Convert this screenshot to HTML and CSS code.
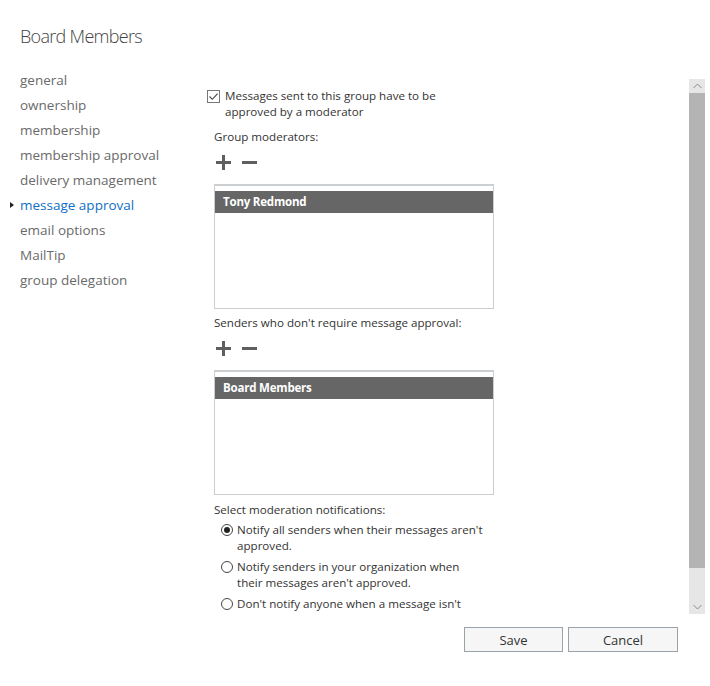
FILE: index.html
```html
<!DOCTYPE html>
<html lang="en">
<head>
<meta charset="utf-8">
<title>Board Members</title>
<link rel="stylesheet" href="styles.css">
</head>
<body>
<div class="page">
  <h1 class="title">Board Members</h1>
  <div class="main">
    <ul class="nav">
      <li>general</li>
      <li>ownership</li>
      <li>membership</li>
      <li>membership approval</li>
      <li>delivery management</li>
      <li class="active">message approval</li>
      <li>email options</li>
      <li>MailTip</li>
      <li>group delegation</li>
    </ul>
    <div class="scroller">
      <div class="content">
        <div class="check-row">
          <span class="checkbox">
            <svg width="11" height="11" viewBox="0 0 11 11"><path d="M1.5 5.5 L4.3 8.3 L9.6 2.6" fill="none" stroke="#444" stroke-width="1.1"/></svg>
          </span>
          <span class="check-text">Messages sent to this group have to be approved by a moderator</span>
        </div>
        <div class="section">
          <div class="label">Group moderators:</div>
          <div class="tools">
            <svg class="plus" width="15" height="15" viewBox="0 0 15 15"><path d="M0 6h15v3H0zM6 0h3v15H6z" fill="#5f5f5f"/></svg>
            <svg class="minus" width="15" height="15" viewBox="0 0 15 15"><path d="M0 6h15v3H0z" fill="#5f5f5f"/></svg>
          </div>
          <div class="listbox">
            <div class="list-item">Tony Redmond</div>
          </div>
        </div>
        <div class="section">
          <div class="label">Senders who don't require message approval:</div>
          <div class="tools">
            <svg class="plus" width="15" height="15" viewBox="0 0 15 15"><path d="M0 6h15v3H0zM6 0h3v15H6z" fill="#5f5f5f"/></svg>
            <svg class="minus" width="15" height="15" viewBox="0 0 15 15"><path d="M0 6h15v3H0z" fill="#5f5f5f"/></svg>
          </div>
          <div class="listbox">
            <div class="list-item">Board Members</div>
          </div>
        </div>
        <div class="section notify">
          <div class="label">Select moderation notifications:</div>
          <div class="radios">
            <div class="radio-row">
              <span class="radio checked"></span>
              <span class="radio-text">Notify all senders when their messages aren't approved.</span>
            </div>
            <div class="radio-row">
              <span class="radio"></span>
              <span class="radio-text">Notify senders in your organization when their messages aren't approved.</span>
            </div>
            <div class="radio-row">
              <span class="radio"></span>
              <span class="radio-text">Don't notify anyone when a message isn't approved.</span>
            </div>
          </div>
        </div>
      </div>
      <div class="scrollbar">
        <div class="sb-btn sb-up">
          <svg width="9" height="6" viewBox="0 0 9 6"><path d="M0.5 5 L4.5 1 L8.5 5" fill="none" stroke="#8a8a8a" stroke-width="1"/></svg>
        </div>
        <div class="sb-thumb"></div>
        <div class="sb-rest">
          <svg width="9" height="6" viewBox="0 0 9 6"><path d="M0.5 1 L4.5 5 L8.5 1" fill="none" stroke="#8a8a8a" stroke-width="1"/></svg>
        </div>
      </div>
    </div>
  </div>
  <div class="buttons">
    <button class="btn btn-save">Save</button>
    <button class="btn btn-cancel">Cancel</button>
  </div>
</div>
</body>
</html>
```
FILE: styles.css
```css
* { box-sizing: border-box; }
html, body { margin: 0; padding: 0; background: #fff; }
body {
  font-family: "Segoe UI", "Open Sans", "Noto Sans", sans-serif;
  color: #333;
  width: 710px;
  height: 686px;
  overflow: hidden;
}
.page { padding-top: 22px; }
.title {
  margin: 0 0 0 20px;
  font-size: 18px;
  font-weight: 300;
  letter-spacing: -0.7px;
  line-height: 28px;
  color: #444;
}
.main {
  display: flex;
  align-items: flex-start;
  margin-top: 17px;
}
.nav {
  list-style: none;
  margin: 1px 0 0 0;
  padding: 0 0 0 20px;
  width: 190px;
  flex: none;
}
.nav li {
  position: relative;
  font-size: 13.5px;
  line-height: 25px;
  color: #6a6a6a;
  white-space: nowrap;
}
.nav li.active { color: #0f6fc6; }
.nav li.active::before {
  content: "";
  position: absolute;
  left: -10px;
  top: 9px;
  border-left: 4px solid #222;
  border-top: 3.5px solid transparent;
  border-bottom: 3.5px solid transparent;
}
.scroller {
  margin-top: 12px;
  width: 515px;
  height: 535px;
  display: flex;
  flex: none;
}
.content {
  flex: 1;
  overflow: hidden;
  padding: 9px 0 0 17px;
  font-size: 11.6px;
  line-height: 16px;
}
.check-row { display: flex; align-items: flex-start; }
.checkbox {
  width: 13px;
  height: 13px;
  border: 1px solid #777;
  margin-top: 2px;
  margin-right: 5px;
  flex: none;
  display: flex;
  align-items: center;
  justify-content: center;
  background: #fff;
}
.checkbox svg { display: block; }
.check-text { width: 230px; }
.section { padding-left: 7px; margin-top: 9px; }
.section + .section { margin-top: 6px; }
.section.notify { margin-top: 7px; }
.label { color: #333; }
.tools {
  display: flex;
  gap: 11px;
  height: 15px;
  margin-top: 10px;
  padding-left: 2px;
}
.tools svg { display: block; }
.listbox {
  margin-top: 14px;
  width: 280px;
  height: 125px;
  border: 1px solid #cbcfd1;
  border-top: 2px solid #cbcfd1;
  padding-top: 5px;
  background: #fff;
}
.list-item {
  height: 22px;
  line-height: 22px;
  background: #666;
  color: #fff;
  font-weight: bold;
  font-size: 11.5px;
  letter-spacing: -0.2px;
  padding-left: 8px;
}
.radios { margin-top: 4px; padding-left: 7px; }
.radio-row { display: flex; align-items: flex-start; margin-bottom: 5px; }
.radio {
  width: 12px;
  height: 12px;
  border: 1px solid #444;
  border-radius: 50%;
  margin-top: 2px;
  margin-right: 4px;
  flex: none;
  position: relative;
  background: #fff;
}
.radio.checked::after {
  content: "";
  position: absolute;
  left: 2px;
  top: 2px;
  width: 6px;
  height: 6px;
  border-radius: 50%;
  background: #222;
}
.radio-text { width: 248px; color: #333; }
.scrollbar {
  width: 16px;
  flex: none;
  display: flex;
  flex-direction: column;
  background: #e6e6e6;
}
.sb-btn {
  height: 14px;
  display: flex;
  align-items: center;
  justify-content: center;
}
.sb-btn svg, .sb-rest svg { display: block; }
.sb-thumb {
  height: 475px;
  background: #b4b4b4;
  flex: none;
}
.sb-rest {
  flex: 1;
  display: flex;
  align-items: flex-end;
  justify-content: center;
  padding-bottom: 4px;
}
.buttons {
  display: flex;
  justify-content: flex-end;
  gap: 5px;
  padding-right: 32px;
  margin-top: 13px;
}
.btn {
  font-family: inherit;
  font-size: 13px;
  color: #333;
  height: 25px;
  background: #f6f6f6;
  border: 1px solid #9aa4a8;
  border-radius: 0;
  padding: 0;
  margin: 0;
}
.btn-save { width: 99px; }
.btn-cancel { width: 110px; }
```
